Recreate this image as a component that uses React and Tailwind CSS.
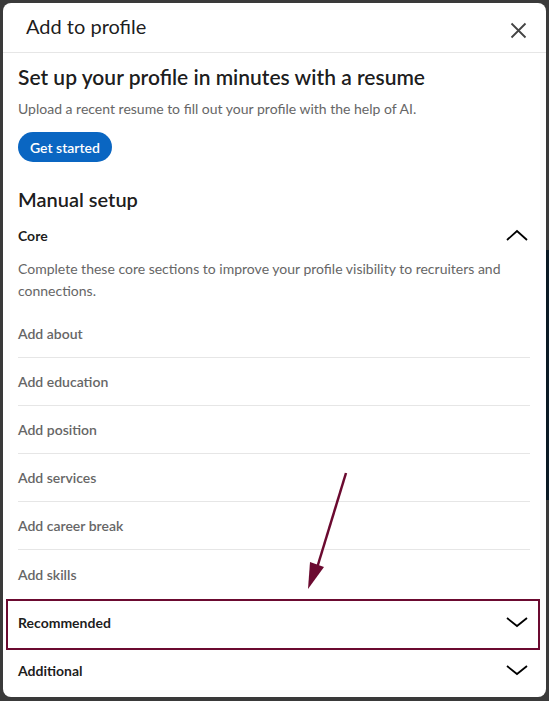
import React from "react";

const F = { fontFamily: "Lato, 'Noto Sans', sans-serif" };

function ChevronUp() {
  return (
    <svg width="22" height="14" viewBox="0 0 22 14" fill="none">
      <path d="M1 12 L11 3 L21 12" stroke="#000" strokeWidth="1.8" />
    </svg>
  );
}
function ChevronDown() {
  return (
    <svg width="22" height="14" viewBox="0 0 22 14" fill="none">
      <path d="M1 3 L11 11 L21 3" stroke="#000" strokeWidth="1.8" />
    </svg>
  );
}

const items = [
  "Add about",
  "Add education",
  "Add position",
  "Add services",
  "Add career break",
  "Add skills",
];

export default function App() {
  return (
    <div className="relative w-[549px] h-[701px] bg-[#3a3a3a] overflow-hidden pt-[3px] pl-[3px]" style={F}>
      <div className="absolute right-0 top-[250px] w-[3px] h-[250px] bg-[#0b1a24]" />
      <div className="relative w-[543px] h-[694px] bg-white rounded-[8px] flex flex-col">
        <div className="h-[50px] flex items-center justify-between pl-[23px] pr-[19px] border-b border-[#e6e6e6]">
          <span className="text-[20px] text-[#000000e6] mb-[4px]">Add to profile</span>
          <svg className="mt-[6px]" width="17" height="17" viewBox="0 0 17 17" fill="none">
            <path d="M1.5 1.5 L15.5 15.5 M15.5 1.5 L1.5 15.5" stroke="#444" strokeWidth="1.8" />
          </svg>
        </div>
        <div className="flex flex-col pl-[15px] pr-[16px]">
          <div className="pt-[12px] text-[21px] leading-[24px] font-semibold text-[#000000e6]">
            Set up your profile in minutes with a resume
          </div>
          <div className="mt-[10px] text-[14px] leading-[20px] text-[#666]">
            Upload a recent resume to fill out your profile with the help of AI.
          </div>
          <div className="mt-[13px]">
            <button className="h-[30px] px-[12px] rounded-full bg-[#0a66c2] text-white text-[14px] font-semibold">
              Get started
            </button>
          </div>
          <div className="mt-[25px] text-[20px] leading-[24px] font-semibold text-[#000000e6]">
            Manual setup
          </div>
          <div className="h-[32px] mt-[8px] flex items-center justify-between">
            <span className="text-[14px] font-bold text-[#000000e6]">Core</span>
            <span className="mr-[2px]"><ChevronUp /></span>
          </div>
          <div className="mt-[7px] text-[14px] leading-[22px] text-[#666]">
            Complete these core sections to improve your profile visibility to recruiters and connections.
          </div>
          <div className="mt-[8px] flex flex-col">
            {items.map((t, i) => (
              <div
                key={t}
                className={
                  "h-[48px] flex items-center text-[14px] font-semibold text-[#666] " +
                  (i < items.length - 1 ? "border-b border-[#e6e6e6]" : "")
                }
              >
                {t}
              </div>
            ))}
          </div>
          <div className="h-[48px] flex items-center justify-between">
            <span className="text-[14px] font-bold text-[#000000e6]">Recommended</span>
            <span className="mr-[2px]"><ChevronDown /></span>
          </div>
          <div className="h-[48px] flex items-center justify-between">
            <span className="text-[14px] font-bold text-[#000000e6]">Additional</span>
            <span className="mr-[2px]"><ChevronDown /></span>
          </div>
        </div>
        <div className="absolute left-[3px] top-[596px] w-[534px] h-[51px] border-2 border-[#6b0a30]" />
        <svg className="absolute left-0 top-0" width="543" height="694" viewBox="0 0 543 694" fill="none">
          <path d="M343 470 L314 565" stroke="#6b0a30" strokeWidth="2.5" />
          <path d="M305 586 L307 559 L321 564 Z" fill="#6b0a30" />
        </svg>
      </div>
    </div>
  );
}
